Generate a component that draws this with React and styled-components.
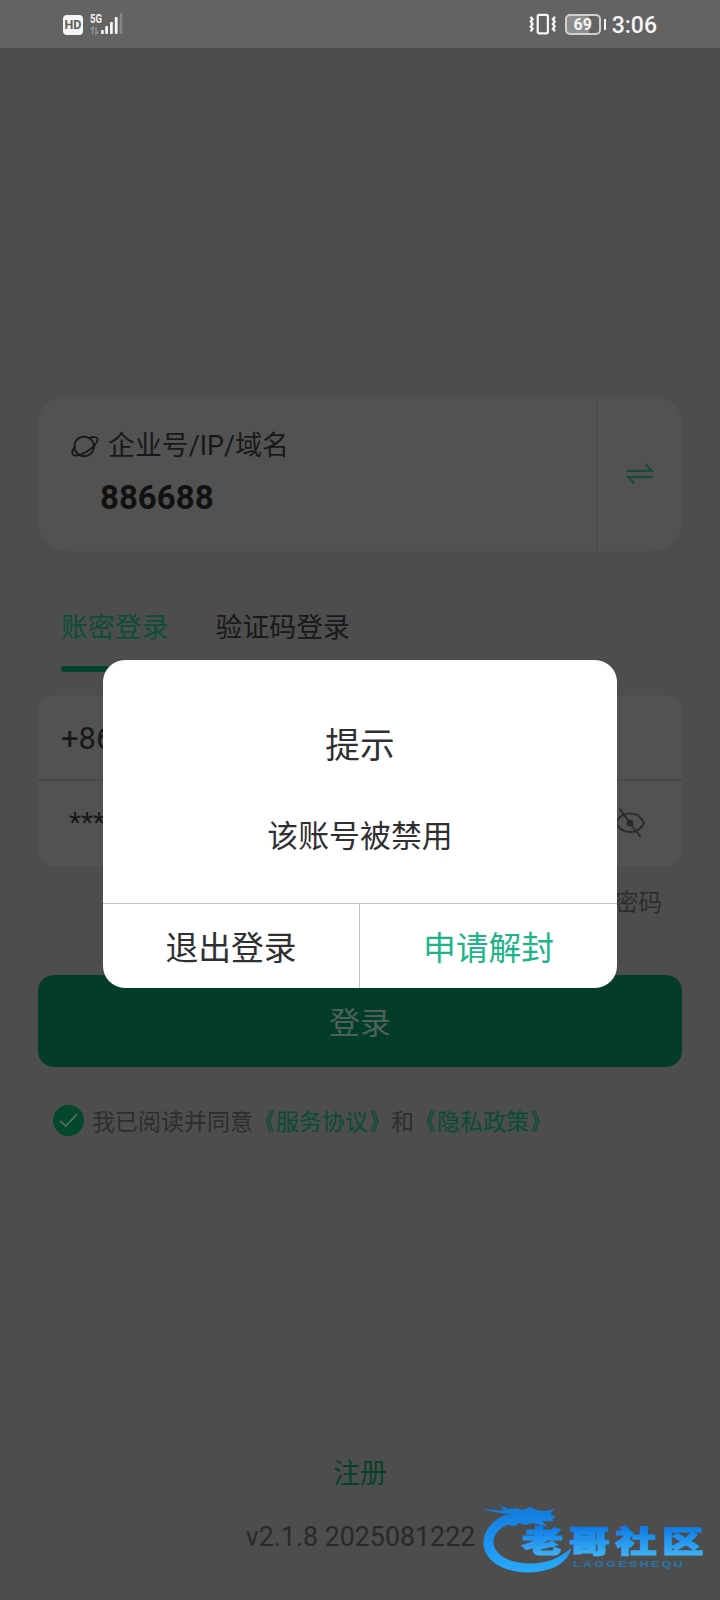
import React from "react";
import styled, { createGlobalStyle } from "styled-components";

function App() {
  return (
    <>
      <GlobalStyle />
      <Screen>
        <StatusBar />
        <Main>
          <CompanyCard>
            <CompanyInfo>
              <CompanyLabel>
                <PlanetIcon />
                <LabelText>企业号/IP/域名</LabelText>
              </CompanyLabel>
              <CompanyNumber>886688</CompanyNumber>
            </CompanyInfo>
            <SwitchBox>
              <SwapIcon />
            </SwitchBox>
          </CompanyCard>
          <Tabs>
            <Tab $active>账密登录</Tab>
            <Tab>验证码登录</Tab>
          </Tabs>
          <Fields>
            <Field>+86</Field>
            <Field $password>
              <Stars>******</Stars>
              <EyeOffIcon />
            </Field>
          </Fields>
          <Forgot>忘记密码</Forgot>
          <LoginButton>登录</LoginButton>
          <Agreement>
            <CheckIcon />
            <span>
              我已阅读并同意
              <DocLink>服务协议</DocLink>和<DocLink>隐私政策</DocLink>
            </span>
          </Agreement>
        </Main>
        <Footer>
          <Register>注册</Register>
          <Version>v2.1.8 2025081222</Version>
        </Footer>
        <ModalLayer>
          <Modal>
            <ModalBody>
              <ModalTitle>提示</ModalTitle>
              <ModalText>该账号被禁用</ModalText>
            </ModalBody>
            <ModalButtons>
              <ModalButton>退出登录</ModalButton>
              <ModalButton $primary>申请解封</ModalButton>
            </ModalButtons>
          </Modal>
        </ModalLayer>
        <Watermark />
      </Screen>
    </>
  );
}

export default App;

function StatusBar() {
  return (
    <Bar>
      <BarLeft>
        <HdBadge>HD</HdBadge>
        <Signal />
      </BarLeft>
      <BarRight>
        <VibrateIcon />
        <Battery>
          <BatteryLevel>69</BatteryLevel>
          <BatteryTip />
        </Battery>
        <Time>3:06</Time>
      </BarRight>
    </Bar>
  );
}

function DocLink({ children }) {
  return (
    <Link>
      <Bracket $open>《</Bracket>
      {children}
      <Bracket>》</Bracket>
    </Link>
  );
}

function Signal() {
  return (
    <svg width="34" height="24" viewBox="0 0 34 24">
      <text
        x="0"
        y="10.5"
        fill="#f2f2f2"
        fontFamily="Roboto"
        fontWeight="700"
        fontSize="12.5"
        textLength="12"
        lengthAdjust="spacingAndGlyphs"
      >
        5G
      </text>
      <g stroke="#929292" strokeWidth="1.5" fill="none">
        <path d="M0.5 17.5L3 15V22M6 15V22L8.5 19.5" />
      </g>
      <g fill="#f5f5f5">
        <rect x="11" y="18" width="2.8" height="4" rx="0.8" />
        <rect x="15.2" y="14" width="2.8" height="8" rx="0.8" />
        <rect x="20" y="10" width="2.8" height="12" rx="0.8" />
        <rect x="24.8" y="5" width="2.8" height="17" rx="0.8" />
        <rect x="29.7" y="1" width="2.6" height="21" rx="0.8" fill="#858585" />
      </g>
    </svg>
  );
}

function VibrateIcon() {
  return (
    <svg width="28" height="22" viewBox="0 0 28 22" fill="none" stroke="#f5f5f5">
      <rect x="8.7" y="1.9" width="10.2" height="18.4" rx="1.5" strokeWidth="2.2" />
      <path
        strokeWidth="2.3"
        d="M1.5 3.9L3.6 6.2L1.8 8.6L3.6 11L1.8 13.4L3.6 15.8L1.5 18.4M26 3.9L23.9 6.2L25.7 8.6L23.9 11L25.7 13.4L23.9 15.8L26 18.4"
      />
    </svg>
  );
}

function PlanetIcon() {
  return (
    <svg width="28" height="24" viewBox="0 0 28 24" fill="none" stroke="#181818" strokeWidth="1.8">
      <circle cx="13.2" cy="12.4" r="9.8" />
      <path d="M18.4 3.8C22.5 2.4 26.2 2.8 26.6 5.2C27 8.4 22 13.9 16 17.6C9.8 21.4 3.4 22.7 1.7 20.2C0.6 18.4 2 15.2 4.2 12.6" />
    </svg>
  );
}

function SwapIcon() {
  return (
    <svg width="28" height="22" viewBox="0 0 28 22" fill="none" stroke="#1c4a39" strokeWidth="2.3">
      <path d="M0.5 7.8H25.5L19.8 1.5M27 14.2H2.2L8 20.5" />
    </svg>
  );
}

function EyeOffIcon() {
  return (
    <svg width="32" height="30" viewBox="0 0 32 30" fill="none" stroke="#2b2b2b" strokeWidth="1.9">
      <path d="M2 15C8 2.2 24 2.2 30 15C24 27 8 27 2 15Z" />
      <circle cx="16" cy="15" r="3.4" fill="#2b2b2b" stroke="none" />
      <path d="M5.5 0.8L26.5 29" />
    </svg>
  );
}

function CheckIcon() {
  return (
    <svg width="31" height="31" viewBox="0 0 31 31" fill="none">
      <circle cx="15.5" cy="15.5" r="15.4" fill="#03472d" />
      <path d="M7.2 15.8L12.8 21L24 9.2" stroke="#5b6b63" strokeWidth="1.7" />
    </svg>
  );
}

function Watermark() {
  return (
    <WatermarkSvg width="230" height="84" viewBox="0 -5 230 84">
      <defs>
        <linearGradient id="blue" gradientUnits="userSpaceOnUse" x1="0" y1="6" x2="0" y2="72">
          <stop offset="0" stopColor="#137bdc" />
          <stop offset="0.5" stopColor="#1a92f2" />
          <stop offset="1" stopColor="#2caaf8" />
        </linearGradient>
        <linearGradient id="word" gradientUnits="userSpaceOnUse" x1="0" y1="-26" x2="0" y2="3">
          <stop offset="0" stopColor="#0b7ae6" />
          <stop offset="1" stopColor="#3db0f5" />
        </linearGradient>
      </defs>
      {/* dragon: head on top, body curling into a ring */}
      <g fill="url(#blue)">
        <path d="M27 12C12 17 2.5 28 2.5 41C2.5 58 22 70.5 47 70.5C69 70.5 88 61 90 46C80 55 67 61.5 50 61.5C29 61.5 12.5 53 12.5 40C12.5 32 19 25 30 21.5Z" />
        <path d="M1 6.5L19 8.5L23 8L18 3L28 7L35 6L41 8L49 5L57 8.5L65 9L74 6.5L69 12L75 15L71 17L73 19.5L61 19L66 24.5L51 21L45 23L37 21L35 24L27 23L24 17L29 12L19 11L11 9.5Z" />
      </g>
      <text
        transform="translate(41 50) scale(1.4 1)"
        fontFamily="'Noto Sans CJK SC', sans-serif"
        fontWeight="900"
        fontSize="29.5"
        letterSpacing="3.9"
        fill="url(#word)"
        stroke="url(#word)"
        strokeWidth="1.2"
      >
        老哥社区
      </text>
      <text
        transform="translate(92 64.5) scale(1.3 1)"
        fontFamily="Liberation Sans, sans-serif"
        fontWeight="700"
        fontSize="9.6"
        textLength="84.5"
        fill="#2676ae"
      >
        LAOGESHEQU
      </text>
    </WatermarkSvg>
  );
}

const GlobalStyle = createGlobalStyle`
  body {
    margin: 0;
    background: #4d4d4d;
    font-family: Roboto, "Noto Sans CJK SC", sans-serif;
  }
  * {
    box-sizing: border-box;
  }
  svg {
    display: block;
    flex-shrink: 0;
  }
`;

const Screen = styled.div`
  position: relative;
  display: flex;
  flex-direction: column;
  width: 720px;
  height: 1600px;
  overflow: hidden;
  background: #4d4d4d;
  color: #181818;
`;

const Bar = styled.header`
  display: flex;
  justify-content: space-between;
  height: 48px;
  padding: 0 63px;
  background: #636363;
`;

const BarLeft = styled.div`
  display: flex;
  gap: 7px;
  padding-top: 12px;
`;

const BarRight = styled.div`
  display: flex;
  align-items: center;
  color: #f5f5f5;
`;

const HdBadge = styled.div`
  width: 20px;
  height: 20px;
  margin-top: 3px;
  border-radius: 4px;
  background: #f5f5f5;
  color: #5c5c5c;
  font-size: 12.5px;
  font-weight: 700;
  line-height: 20px;
  text-align: center;
`;

const Battery = styled.div`
  display: flex;
  align-items: center;
  gap: 3px;
  margin: 1px 6px 0 8px;
`;

const BatteryLevel = styled.div`
  width: 36px;
  height: 21px;
  border: 2px solid #d0d0d0;
  border-radius: 5px;
  background: linear-gradient(90deg, #8e8e8e 68%, #636363 68%);
  font-size: 16px;
  font-weight: 700;
  line-height: 17px;
  text-align: center;
`;

const BatteryTip = styled.div`
  width: 2px;
  height: 11px;
  background: #f5f5f5;
`;

const Time = styled.div`
  padding-top: 3px;
  font-size: 23px;
  font-weight: 500;
`;

const Main = styled.main`
  display: flex;
  flex-direction: column;
  padding: 348px 38px 0;
`;

const CompanyCard = styled.section`
  display: flex;
  height: 155px;
  border-radius: 28px;
  background: #525252;
`;

const CompanyInfo = styled.div`
  flex: 1;
  padding: 30px 0 0 33px;
`;

const CompanyLabel = styled.div`
  display: flex;
  align-items: center;
  gap: 9px;
  height: 40px;
  font-size: 26.9px;
`;

const LabelText = styled.span`
  padding-bottom: 5px;
`;

const CompanyNumber = styled.div`
  padding: 12px 0 0 29px;
  font-size: 33px;
  font-weight: 700;
  line-height: 40px;
  color: #111;
`;

const SwitchBox = styled.div`
  display: flex;
  align-items: center;
  justify-content: center;
  width: 86px;
  border-left: 2px solid #4d4d4d;
`;

const Tabs = styled.nav`
  display: flex;
  gap: 47px;
  height: 121px;
  padding: 57px 0 0 23px;
`;

const Tab = styled.div`
  height: 64px;
  font-size: 26.9px;
  line-height: 40px;
  color: ${({ $active }) => ($active ? "#0b4d35" : "#181818")};

  &::after {
    content: "";
    display: ${({ $active }) => ($active ? "block" : "none")};
    height: 6px;
    margin-top: 18px;
    border-radius: 3px;
    background: #03442c;
  }
`;

const Fields = styled.section`
  height: 171px;
  margin-top: 23px;
  border-radius: 16px;
  background: #525252;
`;

const Field = styled.div`
  display: flex;
  align-items: center;
  justify-content: space-between;
  height: ${({ $password }) => ($password ? "87px" : "84px")};
  padding: ${({ $password }) => ($password ? "0 36px 2px 31px" : "2px 23px 0")};
  border-top: ${({ $password }) => ($password ? "2px solid #484848" : "0")};
  font-size: 31px;
`;

const Stars = styled.span`
  font-size: 28px;
`;

const Forgot = styled.div`
  height: 40px;
  margin-top: 17px;
  padding-right: 20px;
  font-size: 23.5px;
  line-height: 40px;
  text-align: right;
  color: #2d2d2d;
`;

const LoginButton = styled.button`
  height: 92px;
  margin-top: 52px;
  padding: 0 0 2px;
  border: 0;
  border-radius: 16px;
  background: #033d29;
  color: #4c6258;
  font-family: inherit;
  font-size: 30.9px;
`;

const Agreement = styled.div`
  display: flex;
  align-items: center;
  gap: 8px;
  margin-top: 36px;
  padding-left: 15px;
  font-size: 23px;
  color: #2d2d2d;
`;

const Link = styled.span`
  color: #084c33;
`;

const Bracket = styled.span`
  display: inline-block;
  transform: ${({ $open }) => ($open ? "translateX(-2px)" : "translateX(2px)")} scaleX(0.75);
  transform-origin: ${({ $open }) => ($open ? "right" : "left")};
  -webkit-text-stroke: 0.4px #084c33;
`;

const Footer = styled.footer`
  display: flex;
  flex-direction: column;
  align-items: center;
  gap: 23px;
  margin-top: auto;
  padding-bottom: 43px;
`;

const Register = styled.div`
  font-size: 26.8px;
  line-height: 40px;
  color: #084029;
`;

const Version = styled.div`
  padding-left: 1px;
  font-size: 26.8px;
  line-height: 40px;
  color: #292929;
`;

const ModalLayer = styled.div`
  position: absolute;
  inset: 48px 0 0;
  display: flex;
  align-items: center;
  justify-content: center;
`;

const Modal = styled.div`
  width: 514px;
  height: 328px;
  border-radius: 22px;
  overflow: hidden;
  background: #fff;
  color: #303033;
`;

const ModalBody = styled.div`
  display: flex;
  flex-direction: column;
  align-items: center;
  gap: 41px;
  height: 243px;
  padding-top: 61px;
`;

const ModalTitle = styled.div`
  font-size: 34.7px;
  line-height: 50px;
`;

const ModalText = styled.div`
  font-size: 30.9px;
  line-height: 50px;
`;

const ModalButtons = styled.div`
  display: grid;
  grid-template-columns: 256px 258px;
  height: 85px;
  border-top: 1px solid #c4c4c4;
`;

const ModalButton = styled.button`
  padding: 0 0 2px;
  border: 0;
  border-left: ${({ $primary }) => ($primary ? "1px solid #c4c4c4" : "0")};
  background: none;
  font-family: inherit;
  font-size: 32.8px;
  color: ${({ $primary }) => ($primary ? "#1db588" : "#303033")};
`;

const WatermarkSvg = styled.svg`
  position: absolute;
  left: 481px;
  top: 1497px;
  overflow: visible;
`;
